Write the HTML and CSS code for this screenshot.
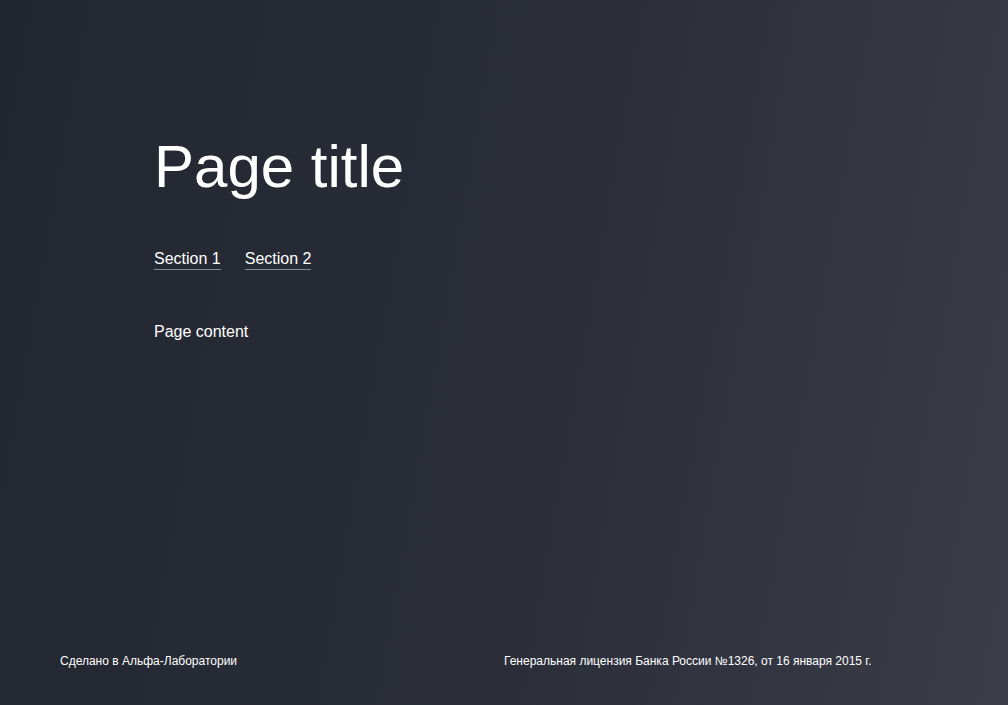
FILE: index.html
```html
<!DOCTYPE html>
<html lang="ru">
<head>
<meta charset="utf-8">
<title>Page title</title>
<link rel="stylesheet" href="styles.css">
</head>
<body>
<div class="page">
  <main class="main">
    <h1 class="title">Page title</h1>
    <nav class="tabs">
      <a class="tab" href="#">Section 1</a>
      <a class="tab" href="#">Section 2</a>
    </nav>
    <div class="content">Page content</div>
  </main>
  <footer class="footer">
    <div class="footer-col">Сделано в Альфа-Лаборатории</div>
    <div class="footer-col">Генеральная лицензия Банка России №1326, от 16 января 2015 г.</div>
  </footer>
</div>
</body>
</html>
```

FILE: styles.css
```css
html, body {
  margin: 0;
  height: 100%;
}
body {
  font-family: "Liberation Sans", Arial, sans-serif;
  color: #ffffff;
  background: linear-gradient(100deg, #22262f 0%, #2b2e39 55%, #3a3d48 100%);
}
.page {
  min-height: 100vh;
  display: flex;
  flex-direction: column;
}
.main {
  flex: 1;
  padding: 137px 154px 0;
}
.title {
  margin: 0;
  font-size: 60px;
  font-weight: normal;
  line-height: 60px;
}
.tabs {
  display: flex;
  gap: 24px;
  margin-top: 52px;
}
.tab {
  color: #ffffff;
  text-decoration: none;
  font-size: 16px;
  line-height: 20px;
  border-bottom: 1px solid rgba(255, 255, 255, 0.45);
}
.content {
  margin-top: 52px;
  font-size: 16px;
  line-height: 20px;
}
.footer {
  display: grid;
  grid-template-columns: 1fr 1fr;
  padding: 0 60px 36px;
  font-size: 12px;
  line-height: 16px;
}
```
